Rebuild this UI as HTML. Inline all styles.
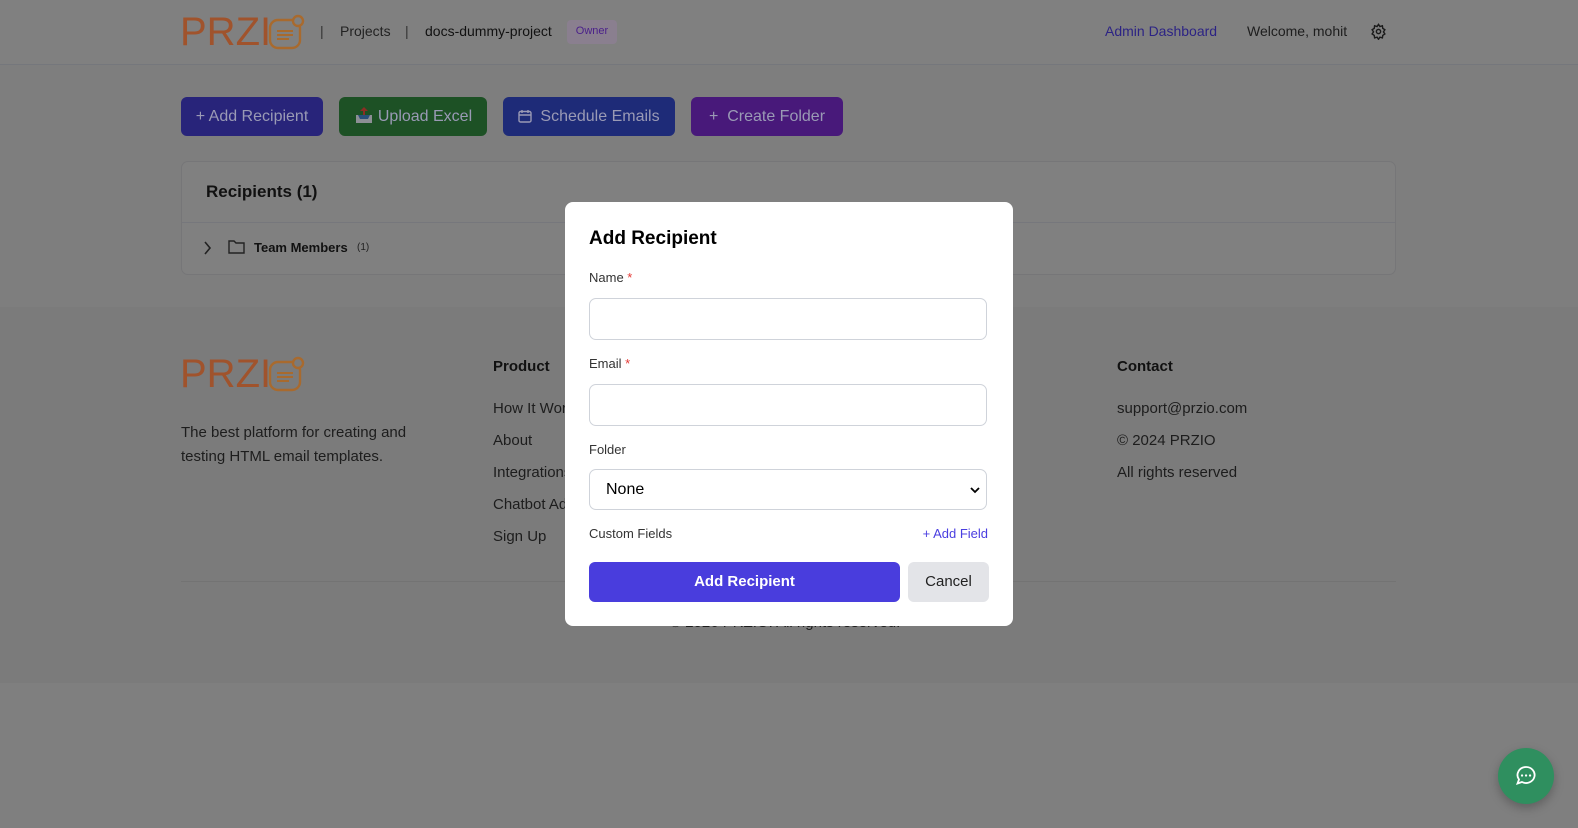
<!DOCTYPE html>
<html><head><meta charset="utf-8"><style>
*{box-sizing:border-box;margin:0;padding:0}
body{width:1578px;height:828px;overflow:hidden;background:#7f7f7f;font-family:"Liberation Sans",sans-serif;position:relative;color:#111}
.hdr{position:absolute;left:0;top:0;width:1578px;height:65px;background:#808080;border-bottom:1px solid #75777c}
.main{position:absolute;left:0;top:65px;width:1578px;height:242px;background:#7e7e7e}
.foot{position:absolute;left:0;top:307px;width:1578px;height:376px;background:#7b7b7b}
.t{position:absolute;white-space:nowrap}
.btn{position:absolute;top:97px;height:39px;border-radius:6px;color:#9a9ab5;font-size:16px;line-height:39px;text-align:center}
.modal{position:absolute;left:565px;top:202px;width:448px;height:424px;background:#fff;border-radius:8px}
.inp{position:absolute;left:24px;width:398px;height:42px;border:1px solid #cfd3da;border-radius:7px;background:#fff}
.lbl{position:absolute;left:24px;font-size:13px;color:#333}
</style></head><body>
<div class="hdr"></div>
<div class="main"></div>
<div class="foot"></div>

<!-- logo -->
<div class="t" style="left:180px;top:10px;font-size:40px;letter-spacing:0px;color:#a0532c;font-weight:300;line-height:44px">PRZI</div>
<svg style="position:absolute;left:268px;top:14px" width="38" height="36" viewBox="0 0 38 36"><rect x="2" y="6" width="30" height="28" rx="8" fill="none" stroke="#a86a2e" stroke-width="2.4"/><circle cx="30" cy="7" r="5" fill="#808080" stroke="#a86a2e" stroke-width="2.4"/><path d="M9 17h16M9 21h16M9 25h12" stroke="#a86a2e" stroke-width="2"/></svg>
<div class="t" style="left:320px;top:23px;font-size:14px;color:#333">|</div>
<div class="t" style="left:340px;top:23px;font-size:14px;color:#222">Projects</div>
<div class="t" style="left:405px;top:23px;font-size:14px;color:#333">|</div>
<div class="t" style="left:425px;top:23px;font-size:14px;color:#111">docs-dummy-project</div>
<div class="t" style="left:567px;top:20px;width:50px;height:24px;background:#8a7f8f;border-radius:4px;font-size:11px;color:#4a1f8a;line-height:23px;text-align:center">Owner</div>
<div class="t" style="left:1105px;top:23px;font-size:14px;color:#2c2384">Admin Dashboard</div>
<div class="t" style="left:1247px;top:23px;font-size:14px;color:#1d1d1d">Welcome, mohit</div>
<svg style="position:absolute;left:1370px;top:23px" width="17" height="17" viewBox="0 0 24 24" fill="none" stroke="#1a1a1a" stroke-width="2"><circle cx="12" cy="12" r="3"/><path d="M12 2l2 3 3.5-1 .5 3.5 3 2-2 3 2 3-3 2-.5 3.5-3.5-1-2 3-2-3-3.5 1-.5-3.5-3-2 2-3-2-3 3-2 .5-3.5 3.5 1z"/></svg>

<!-- buttons -->
<div class="btn" style="left:181px;width:142px;background:#28247a">+ Add Recipient</div>
<div class="btn" style="left:339px;width:148px;background:#1d5125"><svg style="vertical-align:-3px;margin-right:4px" width="20" height="18" viewBox="0 0 20 18"><path d="M2 9h16v8H2z" fill="#8d8f95"/><path d="M4 9l2 4h8l2-4" fill="#2a4f7a"/><path d="M10 1l4 4h-3v4H9V5H6z" fill="#8a2e24"/></svg>Upload Excel</div>
<div class="btn" style="left:503px;width:172px;background:#1e2b78"><svg style="vertical-align:-2px;margin-right:8px" width="14" height="14" viewBox="0 0 14 14" fill="none" stroke="#9a9ab5" stroke-width="1.4"><rect x="1" y="2.5" width="12" height="10.5" rx="1.5"/><path d="M1 6h12M4 1v3M10 1v3"/></svg>Schedule Emails</div>
<div class="btn" style="left:691px;width:152px;background:#48197a">+&nbsp; Create Folder</div>

<!-- card -->
<div style="position:absolute;left:181px;top:161px;width:1215px;height:114px;border:1px solid #767678;border-radius:7px;background:#808080"></div>
<div style="position:absolute;left:182px;top:222px;width:1213px;height:1px;background:#76777c"></div>
<div class="t" style="left:206px;top:182px;font-size:17px;font-weight:bold;color:#111">Recipients (1)</div>
<svg style="position:absolute;left:203px;top:241px" width="9" height="14" viewBox="0 0 9 14"><path d="M2 1l5 6-5 6" stroke="#222" stroke-width="1.6" fill="none"/></svg>
<svg style="position:absolute;left:228px;top:239px" width="17" height="15" viewBox="0 0 17 15" fill="none" stroke="#222" stroke-width="1.4"><path d="M1 2h5l2 2h8v10H1z"/></svg>
<div class="t" style="left:254px;top:240px;font-size:13px;font-weight:bold;color:#111">Team Members</div>
<div class="t" style="left:357px;top:242px;font-size:10px;color:#222">(1)</div>

<!-- footer -->
<div class="t" style="left:180px;top:352px;font-size:40px;letter-spacing:0px;color:#a0532c;font-weight:300;line-height:44px">PRZI</div>
<svg style="position:absolute;left:268px;top:356px" width="38" height="36" viewBox="0 0 38 36"><rect x="2" y="6" width="30" height="28" rx="8" fill="none" stroke="#a86a2e" stroke-width="2.4"/><circle cx="30" cy="7" r="5" fill="#7b7b7b" stroke="#a86a2e" stroke-width="2.4"/><path d="M9 17h16M9 21h16M9 25h12" stroke="#a86a2e" stroke-width="2"/></svg>
<div class="t" style="left:181px;top:421px;font-size:15px;line-height:24px;color:#1d1d1d">The best platform for creating and<br>testing HTML email templates.</div>
<div class="t" style="left:493px;top:358px;font-size:15px;font-weight:bold;color:#111">Product</div>
<div class="t" style="left:493px;top:393px;font-size:15px;line-height:32px;color:#1d1d1d">How It Works<br>About<br>Integrations<br>Chatbot Ad<br>Sign Up</div>
<div class="t" style="left:1117px;top:358px;font-size:15px;font-weight:bold;color:#111">Contact</div>
<div class="t" style="left:1117px;top:393px;font-size:15px;line-height:32px;color:#1d1d1d">support@przio.com<br>© 2024 PRZIO<br>All rights reserved</div>
<div style="position:absolute;left:181px;top:581px;width:1215px;height:1px;background:#737373"></div>
<div class="t" style="left:670px;top:614px;font-size:15px;color:#1d1d1d">© 2026 PRZIO. All rights reserved.</div>

<!-- modal -->
<div class="modal">
 <div class="t" style="left:24px;top:26px;font-size:19px;font-weight:bold;color:#000">Add Recipient</div>
 <div class="lbl" style="top:68px">Name <span style="color:#e53935">*</span></div>
 <div class="inp" style="top:96px"></div>
 <div class="lbl" style="top:154px">Email <span style="color:#e53935">*</span></div>
 <div class="inp" style="top:182px"></div>
 <div class="lbl" style="top:240px">Folder</div>
 <div class="inp" style="top:267px;height:41px"><span style="position:absolute;left:16px;top:11px;font-size:16px;color:#000">None</span><svg style="position:absolute;right:6px;top:16px" width="10" height="8" viewBox="0 0 10 8"><path d="M1 2l4 4 4-4" stroke="#000" stroke-width="1.8" fill="none"/></svg></div>
 <div class="lbl" style="top:324px">Custom Fields</div>
 <div class="t" style="right:25px;top:324px;font-size:13px;color:#4a3ee0">+ Add Field</div>
 <div class="t" style="left:24px;top:360px;width:311px;height:40px;background:#493ddd;border-radius:6px;color:#fff;font-size:15px;font-weight:bold;line-height:40px;text-align:center">Add Recipient</div>
 <div class="t" style="left:343px;top:360px;width:81px;height:40px;background:#e3e4e8;border-radius:6px;color:#222;font-size:15px;line-height:40px;text-align:center">Cancel</div>
</div>

<!-- chat -->
<div style="position:absolute;left:1498px;top:748px;width:56px;height:56px;border-radius:50%;background:#2f8f5f;box-shadow:0 4px 10px rgba(0,0,0,.25)"></div>
<svg style="position:absolute;left:1515px;top:765px" width="22" height="22" viewBox="0 0 22 22" fill="none" stroke="#fff" stroke-width="1.8"><path d="M11 2a8.5 8 0 1 1-4 15l-4.5 1.5 1.5-4A8.5 8 0 0 1 11 2z"/><path d="M7 10.5h.1M11 10.5h.1M15 10.5h.1" stroke-width="2.2" stroke-linecap="round"/></svg>
</body></html>
